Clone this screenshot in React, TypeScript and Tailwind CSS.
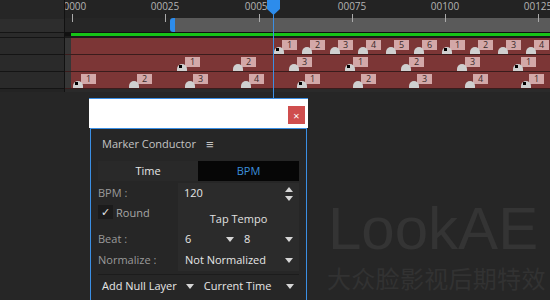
import React from 'react';

const ORIGIN = 66;

type Mark = { x: number; label: number };

const makeRow = (start: number, step: number, count: number, cycle: number[]): Mark[] =>
    Array.from({ length: count }, (_, i) => ({ x: start + step * i, label: cycle[i % cycle.length] }));

const rows: Mark[][] = [
    makeRow(274, 28, 11, [1, 2, 3, 4, 5, 6, 1, 2, 3, 4, 5]),
    makeRow(177, 56, 7, [1, 2, 3]),
    makeRow(73, 56, 9, [1, 2, 3, 4]),
];

const ticks = [
    { x: 73, label: '00000' },
    { x: 166, label: '00025' },
    { x: 260, label: '00050' },
    { x: 353, label: '00075' },
    { x: 446, label: '00100' },
    { x: 539, label: '00125' },
];

const Arrow: React.FC<{ up?: boolean }> = ({ up }) => (
    <svg width="8" height="5" viewBox="0 0 8 5" className="shrink-0">
        <path d={up ? 'M0 5 L4 0 L8 5 Z' : 'M0 0 L8 0 L4 5 Z'} fill="#d6d6d6" />
    </svg>
);

const Marker: React.FC<{ m: Mark }> = ({ m }) => (
    <div className="absolute top-0 h-full" style={{ left: m.x - 5 - ORIGIN }}>
        <div className="absolute left-[8px] top-[2px] w-[15px] h-[10px] bg-[#d3a8a8] text-[9px] leading-[10px] text-center text-[#3a2a2a]">
            {m.label}
        </div>
        <div className="absolute left-0 bottom-0 w-[10px] h-[7px] rounded-t-full bg-[#cfcfcf]">
            {m.label === 1 && <div className="absolute left-[2px] top-[1px] w-[3px] h-[3px] bg-black" />}
        </div>
    </div>
);

export default function App() {
    return (
        <div className="relative w-[550px] h-[300px] overflow-hidden bg-[#262626] font-['Open_Sans','Liberation_Sans',sans-serif] text-[11px]">
            {/* timeline */}
            <div className="flex h-[92px]">
                <div className="w-[65px] flex flex-col border-r border-[#111]">
                    <div className="h-[19px] bg-[#262626]" />
                    <div className="h-[14px] bg-[#2d2d2d] border-b border-[#141414]" />
                    <div className="h-[5px] bg-[#2a2a2a] border-b border-[#141414]" />
                    <div className="h-[17px] bg-[#2a2a2a] border-b border-[#141414]" />
                    <div className="h-[17px] bg-[#2a2a2a] border-b border-[#141414]" />
                    <div className="h-[17px] bg-[#2a2a2a] border-b border-[#141414]" />
                    <div className="flex-1 bg-[#232323]" />
                </div>
                <div className="relative flex-1 flex flex-col">
                    {/* ruler */}
                    <div className="h-[18px] bg-[#232323]" />
                    <div className="h-[15px] flex bg-[#262626] border-b border-[#111]">
                        <div className="w-[105px]" />
                        <div className="w-[5px] rounded-l-[3px] bg-[#2d8ceb]" />
                        <div className="flex-1 bg-[#5a5a5a]" />
                    </div>
                    <div className="h-[3px] flex">
                        <div className="w-[6px] bg-[#111]" />
                        <div className="flex-1 bg-[#16c316]" />
                    </div>
                    <div className="h-[2px] bg-[#1a1a1a]" />
                    {rows.map((row, r) => (
                        <div key={r} className="h-[17px] flex border-b border-[#3a1c1c]">
                            <div className="w-[6px] bg-[#363636]" />
                            <div className="relative flex-1 bg-[#7c3636]">
                                {row.map((m, i) => (
                                    <Marker key={i} m={m} />
                                ))}
                            </div>
                        </div>
                    ))}
                    <div className="flex-1 bg-[#2a2a2a]" />

                    <div className="absolute inset-x-0 top-0 h-[33px] overflow-hidden">
                        {ticks.map((t) => (
                            <div key={t.label} className="absolute top-0" style={{ left: t.x - ORIGIN }}>
                                <div className="absolute top-[1px] -translate-x-1/2 text-[10px] leading-[11px] text-[#b4b4b4]">{t.label}</div>
                                <div className="absolute top-[14px] w-px h-[8px] bg-[#aaa]" />
                            </div>
                        ))}
                    </div>

                    {/* playhead */}
                    <div className="absolute top-0 left-[208px] w-px h-[98px] bg-[#3b8fe4]" />
                    <svg className="absolute top-0 left-[202px]" width="13" height="15" viewBox="0 0 13 15">
                        <path d="M0 0 H13 V9 L6.5 15 L0 9 Z" fill="#2d8ceb" />
                    </svg>
                </div>
            </div>

            {/* watermark */}
            <div className="absolute left-[328px] top-[196px] text-[60px] leading-[66px] text-[#343434] font-['Liberation_Sans',sans-serif]">LookAE</div>
            <div className="absolute left-[327px] top-[264px] text-[24px] leading-[28px] tracking-[0.3px] text-[#323232] font-['Noto_Sans_CJK_SC',sans-serif]">大众脸影视后期特效</div>

            {/* dialog */}
            <div className="absolute left-[89px] top-[98px] w-[219px] h-[210px] flex flex-col">
                <div className="relative h-[30px] bg-white border-t border-[#3b8fe4]">
                    <div className="absolute right-[3px] top-[7px] w-[17px] h-[18px] bg-[#cf4e4e] flex items-center justify-center text-white text-[11px] leading-none">×</div>
                </div>
                <div className="flex-1 mx-[1px] bg-[#262626] border border-[#3b8fe4] flex flex-col px-[7px] text-[#c4c4c4]">
                    <div className="h-[30px] flex items-center gap-[10px] pl-[4px] pt-[1px] text-[11px]">
                        <span>Marker Conductor</span>
                        <span className="text-[13px]">≡</span>
                    </div>
                    <div className="h-[20px] flex mt-[2px]">
                        <div className="w-[100px] bg-[#292929] flex items-center justify-center text-[#e6e6e6]">Time</div>
                        <div className="flex-1 bg-[#060606] flex items-center justify-center text-[#3c8fdc]">BPM</div>
                    </div>
                    <div className="flex mt-[2px]">
                        <div className="w-[80px] flex flex-col">
                            <div className="h-[21px] flex items-center text-[#9a9a9a]">BPM :</div>
                            <div className="h-[25px] flex items-start pt-[1px]">
                                <div className="w-[15px] h-[14px] bg-[#1b1b1b] flex items-center justify-center text-[#e8e8e8] text-[11px]">✓</div>
                                <span className="ml-[3px] text-[#a6a6a6]">Round</span>
                            </div>
                            <div className="h-[21px] flex items-center text-[#9a9a9a]">Beat :</div>
                            <div className="h-[21px] flex items-center text-[#9a9a9a]">Normalize :</div>
                        </div>
                        <div className="flex-1 flex flex-col bg-[#2b2b2b]">
                            <div className="h-[21px] flex items-center pl-[6px] pr-[6px] text-[#e6e6e6]">
                                <span className="flex-1">120</span>
                                <div className="flex flex-col gap-[4px]">
                                    <Arrow up />
                                    <Arrow />
                                </div>
                            </div>
                            <div className="h-[25px] flex items-center justify-center pt-[5px] text-[#e0e0e0]">Tap Tempo</div>
                            <div className="h-[21px] flex items-center pl-[7px] pr-[6px] text-[#e6e6e6]">
                                <span className="flex-1">6</span>
                                <Arrow />
                                <span className="ml-[10px] flex-1">8</span>
                                <Arrow />
                            </div>
                            <div className="h-[21px] flex items-center pl-[7px] pr-[6px] text-[#e6e6e6]">
                                <span className="flex-1">Not Normalized</span>
                                <Arrow />
                            </div>
                        </div>
                    </div>
                    <div className="h-[4px] border-b border-[#1c1c1c]" />
                    <div className="h-[22px] flex items-center pl-[4px] pr-[5px] text-[#e6e6e6]">
                        <span>Add Null Layer</span>
                        <span className="ml-[9px]"><Arrow /></span>
                        <span className="ml-[10px] flex-1">Current Time</span>
                        <Arrow />
                    </div>
                </div>
            </div>
        </div>
    );
}
